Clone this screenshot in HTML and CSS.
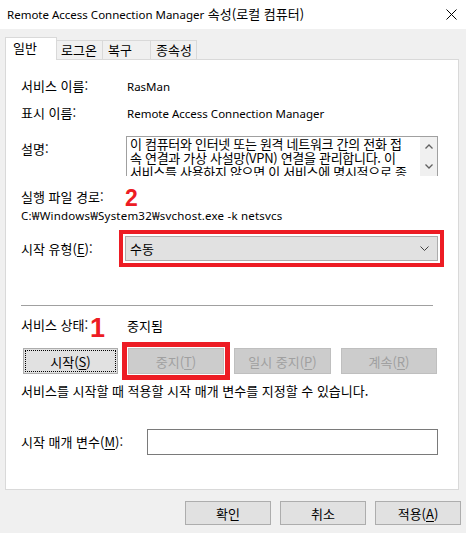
FILE: index.html
```html
<!DOCTYPE html>
<html lang="ko">
<head>
    <meta charset="UTF-8">
    <title>Remote Access Connection Manager 속성(로컬 컴퓨터)</title>
    <link rel="stylesheet" href="styles.css">
</head>
<body>
<div class="window">
    <div class="titlebar">
        <span class="title"><span class="en">Remote Access Connection Manager</span> 속성(로컬 컴퓨터)</span>
        <svg class="close" width="11" height="11" viewBox="0 0 11 11">
            <path d="M0.5 0.5 L10.5 10.5 M10.5 0.5 L0.5 10.5" stroke="#000" stroke-width="1" fill="none"/>
        </svg>
    </div>

    <div class="tabs">
        <div class="tab active">일반</div>
        <div class="tab tab-logon">로그온</div>
        <div class="tab tab-recovery">복구</div>
        <div class="tab tab-deps">종속성</div>
    </div>

    <div class="panel">
        <div class="row row-name">
            <span class="label">서비스 이름:</span>
            <span class="en">RasMan</span>
        </div>
        <div class="row row-display">
            <span class="label">표시 이름:</span>
            <span class="en">Remote Access Connection Manager</span>
        </div>
        <div class="row row-desc">
            <span class="label desc-label">설명:</span>
            <div class="desc-box">
                <div class="desc-text">
                    <span>이 컴퓨터와 인터넷 또는 원격 네트워크 간의 전화 접</span>
                    <span>속 연결과 가상 사설망(VPN) 연결을 관리합니다. 이</span>
                    <span>서비스를 사용하지 않으면 이 서비스에 명시적으로 종</span>
                </div>
                <div class="scrollbar">
                    <svg width="8" height="5" viewBox="0 0 8 5"><path d="M0.5 4.5 L4 1 L7.5 4.5" stroke="#606060" stroke-width="1.3" fill="none"/></svg>
                    <svg width="8" height="5" viewBox="0 0 8 5"><path d="M0.5 0.5 L4 4 L7.5 0.5" stroke="#606060" stroke-width="1.3" fill="none"/></svg>
                </div>
            </div>
        </div>
        <div class="row row-path-label">
            <span class="label">실행 파일 경로:</span>
        </div>
        <div class="path en">C:₩Windows₩System32₩svchost.exe -k netsvcs</div>
        <div class="row row-startup">
            <span class="label">시작 유형(<u>E</u>):</span>
            <div class="combo marked-combo">
                <span>수동</span>
                <svg width="9" height="5" viewBox="0 0 9 5"><path d="M0.5 0.5 L4.5 4.5 L8.5 0.5" stroke="#404040" stroke-width="1" fill="none"/></svg>
            </div>
        </div>

        <div class="separator"></div>

        <div class="row row-status">
            <span class="label">서비스 상태:</span>
            <span>중지됨</span>
        </div>
        <div class="service-buttons">
            <button class="btn btn-start focused">시작(<u>S</u>)</button>
            <button class="btn btn-stop disabled marked-btn">중지(<u>T</u>)</button>
            <button class="btn btn-pause disabled">일시 중지(<u>P</u>)</button>
            <button class="btn btn-resume disabled">계속(<u>R</u>)</button>
        </div>
        <div class="help">서비스를 시작할 때 적용할 시작 매개 변수를 지정할 수 있습니다.</div>
        <div class="row row-param">
            <span class="label">시작 매개 변수(<u>M</u>):</span>
            <div class="param-input"></div>
        </div>

        <span class="marker marker-2">2</span>
        <span class="marker marker-1">1</span>
    </div>

    <div class="footer">
        <button class="btn btn-footer">확인</button>
        <button class="btn btn-footer">취소</button>
        <button class="btn btn-footer">적용(<u>A</u>)</button>
    </div>
</div>
</body>
</html>
```

FILE: styles.css
```css
html, body {
    margin: 0;
    padding: 0;
    background: #ffffff;
}

body {
    font-family: "Noto Sans CJK KR", "Noto Sans", sans-serif;
    font-size: 13px;
    color: #000;
    width: 468px;
    height: 533px;
    overflow: hidden;
}

/* latin runs look smaller than the hangul in the original */
.en {
    font-family: "Noto Sans", "Noto Sans CJK KR", sans-serif;
    font-size: 11.5px;
}

u {
    text-decoration: underline;
    text-underline-offset: 2px;
}

.window {
    width: 466px;
    height: 533px;
    background: #f0f0f0;
}

/* title bar */
.titlebar {
    height: 29px;
    background: #ffffff;
    display: flex;
    align-items: center;
    justify-content: space-between;
    padding: 0 9px 0 7px;
}

.title {
    line-height: 16px;
}

/* tabs */
.tabs {
    display: flex;
    align-items: flex-end;
    margin: 8px 0 0 5px;
    height: 22px;
    position: relative;
    z-index: 1;
}

.tab {
    box-sizing: border-box;
    height: 19px;
    line-height: 17px;
    border: 1px solid #d9d9d9;
    border-left: none;
    border-bottom: none;
    background: #f0f0f0;
    white-space: nowrap;
}

.tab.active {
    height: 23px;
    width: 52px;
    margin-bottom: -1px;
    padding-left: 7px;
    line-height: 19px;
    background: #ffffff;
    border-left: 1px solid #d9d9d9;
}

.tab-logon {
    width: 46px;
    padding-left: 4px;
}

.tab-recovery {
    width: 48px;
    padding-left: 5px;
}

.tab-deps {
    width: 46px;
    padding-left: 5px;
}

/* main panel */
.panel {
    position: relative;
    box-sizing: border-box;
    height: 431px;
    margin: 0 7px 0 5px;
    padding: 0 20px 0 15px;
    background: #ffffff;
    border: 1px solid #d9d9d9;
}

.row {
    display: grid;
    grid-template-columns: 106px 1fr;
    align-items: center;
    height: 20px;
    white-space: nowrap;
}

.label {
    line-height: 20px;
}

.row-name {
    margin-top: 16px;
}

.row-display {
    margin-top: 7px;
}

.row-desc {
    margin-top: 13px;
    height: 40px;
    align-items: start;
}

.desc-label {
    padding-top: 3px;
}

.desc-box {
    box-sizing: border-box;
    margin-left: -1px;
    width: 312px;
    height: 40px;
    border: 1px solid #a0a0a0;
    border-bottom: none;
    display: flex;
    overflow: hidden;
}

.desc-text {
    flex: 1;
    padding-left: 3px;
    line-height: 14px;
    letter-spacing: -0.3px;
    overflow: hidden;
}

.desc-text span {
    display: block;
    white-space: nowrap;
}

.scrollbar {
    width: 17px;
    background: #f0f0f0;
    display: flex;
    flex-direction: column;
    align-items: center;
    justify-content: space-between;
    padding: 7px 0 7px;
}

.row-path-label {
    margin-top: 11px;
}

.path {
    height: 18px;
    line-height: 18px;
    letter-spacing: 0.2px;
    white-space: nowrap;
}

.row-startup {
    margin-top: 11px;
    height: 25px;
}

.combo {
    box-sizing: border-box;
    margin-left: -2px;
    width: 313px;
    height: 25px;
    background: #e1e1e1;
    border: 1px solid #adadad;
    display: flex;
    align-items: center;
    justify-content: space-between;
    padding: 0 8px 0 4px;
}

.marked-combo {
    outline: 4px solid #ed1c24;
    outline-offset: 2px;
}

.separator {
    margin-top: 44px;
    width: 412px;
    height: 1px;
    background: #a0a0a0;
}

.row-status {
    margin-top: 9px;
}

/* service buttons */
.service-buttons {
    margin: 13px 0 0 2px;
    width: 414px;
    display: flex;
    justify-content: space-between;
}

.btn {
    box-sizing: border-box;
    height: 26px;
    padding: 0;
    font-family: inherit;
    font-size: 13px;
    color: #000;
    background: #e1e1e1;
    border: 1px solid #adadad;
    position: relative;
}

.btn-start { width: 95px; }
.btn-stop { width: 96px; }
.btn-pause { width: 97px; }
.btn-resume { width: 96px; }

.btn.focused::after {
    content: "";
    position: absolute;
    inset: 1px;
    border: 1px dotted #000;
}

.btn.disabled {
    background: #cccccc;
    border-color: #bfbfbf;
    color: #a0a0a0;
}

.marked-btn {
    outline: 5px solid #ed1c24;
    outline-offset: 1px;
}

.help {
    margin-top: 7px;
    height: 20px;
    line-height: 20px;
    white-space: nowrap;
}

.row-param {
    margin-top: 28px;
    height: 25px;
    grid-template-columns: 126px 1fr;
}

.param-input {
    box-sizing: border-box;
    width: 291px;
    height: 26px;
    background: #ffffff;
    border: 1px solid #7a7a7a;
}

/* red annotation numbers */
.marker {
    position: absolute;
    font-family: "Liberation Sans", Arial, sans-serif;
    font-weight: bold;
    color: #ed1c24;
    line-height: 0.7;
}

.marker-2 {
    font-size: 23px;
    left: 119px;
    top: 130px;
}

.marker-1 {
    font-size: 27px;
    left: 84px;
    top: 259px;
}

/* dialog footer */
.footer {
    display: flex;
    justify-content: flex-end;
    gap: 9px;
    margin-top: 11px;
    padding-right: 5px;
}

.btn-footer {
    width: 86px;
    height: 24px;
}
```
